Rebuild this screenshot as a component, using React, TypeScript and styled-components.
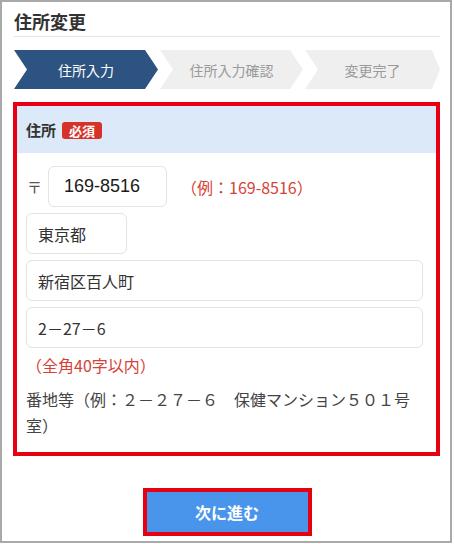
import React from 'react';
import styled, { createGlobalStyle } from 'styled-components';

const GlobalStyle = createGlobalStyle`
  html, body {
    margin: 0;
    padding: 0;
    background: #ffffff;
  }
  body {
    font-family: "Noto Sans CJK JP", "Noto Sans", sans-serif;
    color: #333;
  }
  * {
    box-sizing: border-box;
  }
`;

const Frame = styled.div`
  width: 452px;
  height: 543px;
  border: 2px solid #a9a9a9;
  padding: 8px 10px 0 12px;
  display: flex;
  flex-direction: column;
`;

const Title = styled.h1`
  margin: 0;
  padding: 0 0 4px;
  font-size: 18px;
  line-height: 22px;
  font-weight: 700;
  color: #333;
  border-bottom: 1px solid #e6e6e6;
`;

const Steps = styled.ol`
  list-style: none;
  margin: 13px 0 0;
  padding: 0;
  display: flex;
  gap: 2px;
  height: 39px;
`;

const Step = styled.li<{ active?: boolean; width?: number; tip: number }>`
  flex: ${(p) => (p.width ? `0 0 ${p.width}px` : '1 1 0')};
  display: flex;
  align-items: center;
  justify-content: center;
  font-size: 14px;
  background: ${(p) => (p.active ? '#2c5381' : '#efefef')};
  color: ${(p) => (p.active ? '#ffffff' : '#9a9a9a')};
  clip-path: polygon(
    0 0,
    calc(100% - ${(p) => p.tip}px) 0,
    100% 50%,
    calc(100% - ${(p) => p.tip}px) 100%,
    0 100%,
    13px 50%
  );
`;

const FieldBox = styled.section`
  margin: 13px 0 0 -1px;
  border: 4px solid #e60012;
`;

const FieldHeader = styled.div`
  height: 47px;
  background: #dbe9f9;
  padding-left: 9px;
  display: flex;
  align-items: center;
  gap: 6px;
`;

const FieldLabel = styled.span`
  font-size: 15px;
  font-weight: 700;
  color: #333;
`;

const Required = styled.span`
  background: #d7322a;
  color: #fff;
  font-size: 13px;
  font-weight: 700;
  line-height: 17px;
  padding: 0 7px;
  border-radius: 3px;
  margin-top: 1px;
`;

const FieldBody = styled.div`
  padding: 13px 13px 14px 9px;
  display: flex;
  flex-direction: column;
`;

const Rows = styled.div`
  display: flex;
  flex-direction: column;
  gap: 6px;
`;

const PostalRow = styled.div`
  display: flex;
  align-items: center;
`;

const PostalMark = styled.span`
  width: 22px;
  font-size: 15px;
  color: #555;
  padding-left: 1px;
`;

const Input = styled.input<{ w?: number; latin?: boolean }>`
  width: ${(p) => (p.w ? `${p.w}px` : '100%')};
  height: 41px;
  border: 1px solid #e3e3e3;
  border-radius: 6px;
  padding: 0 0 0 ${(p) => (p.latin ? 15 : 11)}px;
  font-family: ${(p) =>
    p.latin ? '"Liberation Sans", Arial, sans-serif' : '"Noto Sans CJK JP", sans-serif'};
  font-size: ${(p) => (p.latin ? 18 : 16)}px;
  color: ${(p) => (p.latin ? '#1a1a1a' : '#333')};
  background: #fff;
  outline: none;
`;

const Note = styled.span<{ gap?: number }>`
  color: #d64237;
  font-size: 16px;
  line-height: 26px;
  margin-left: ${(p) => p.gap ?? 0}px;
`;

const NoteLine = styled.div`
  margin-top: 4px;
`;

const Hint = styled.p`
  margin: 8px 0 0;
  font-size: 16px;
  line-height: 26px;
  color: #444;
`;

const Actions = styled.div`
  display: flex;
  justify-content: center;
  margin-top: 32px;
`;

const Highlight = styled.div`
  border: 4px solid #e60012;
`;

const NextButton = styled.button`
  display: block;
  width: 161px;
  height: 40px;
  border: 0;
  background: #4a95ec;
  color: #fff;
  font-family: "Noto Sans CJK JP", sans-serif;
  font-size: 16px;
  font-weight: 700;
  cursor: pointer;
`;

const App: React.FC = () => {
  const steps = [
    { label: '住所入力', active: true, width: 144, tip: 13 },
    { label: '住所入力確認', active: false, width: 143, tip: 13 },
    { label: '変更完了', active: false, tip: 8 },
  ];

  return (
    <>
      <GlobalStyle />
      <Frame>
        <Title>住所変更</Title>
        <Steps>
          {steps.map((s) => (
            <Step key={s.label} active={s.active} width={s.width} tip={s.tip}>
              {s.label}
            </Step>
          ))}
        </Steps>
        <FieldBox>
          <FieldHeader>
            <FieldLabel>住所</FieldLabel>
            <Required>必須</Required>
          </FieldHeader>
          <FieldBody>
            <Rows>
              <PostalRow>
                <PostalMark>〒</PostalMark>
                <Input w={119} latin defaultValue="169-8516" />
                <Note gap={14}>（例：169-8516）</Note>
              </PostalRow>
              <Input w={101} defaultValue="東京都" />
              <Input defaultValue="新宿区百人町" />
              <Input defaultValue="2－27－6" />
            </Rows>
            <NoteLine>
              <Note>（全角40字以内）</Note>
            </NoteLine>
            <Hint>番地等（例：２－２７－６　保健マンション５０１号室）</Hint>
          </FieldBody>
        </FieldBox>
        <Actions>
          <Highlight>
            <NextButton>次に進む</NextButton>
          </Highlight>
        </Actions>
      </Frame>
    </>
  );
};

export default App;
